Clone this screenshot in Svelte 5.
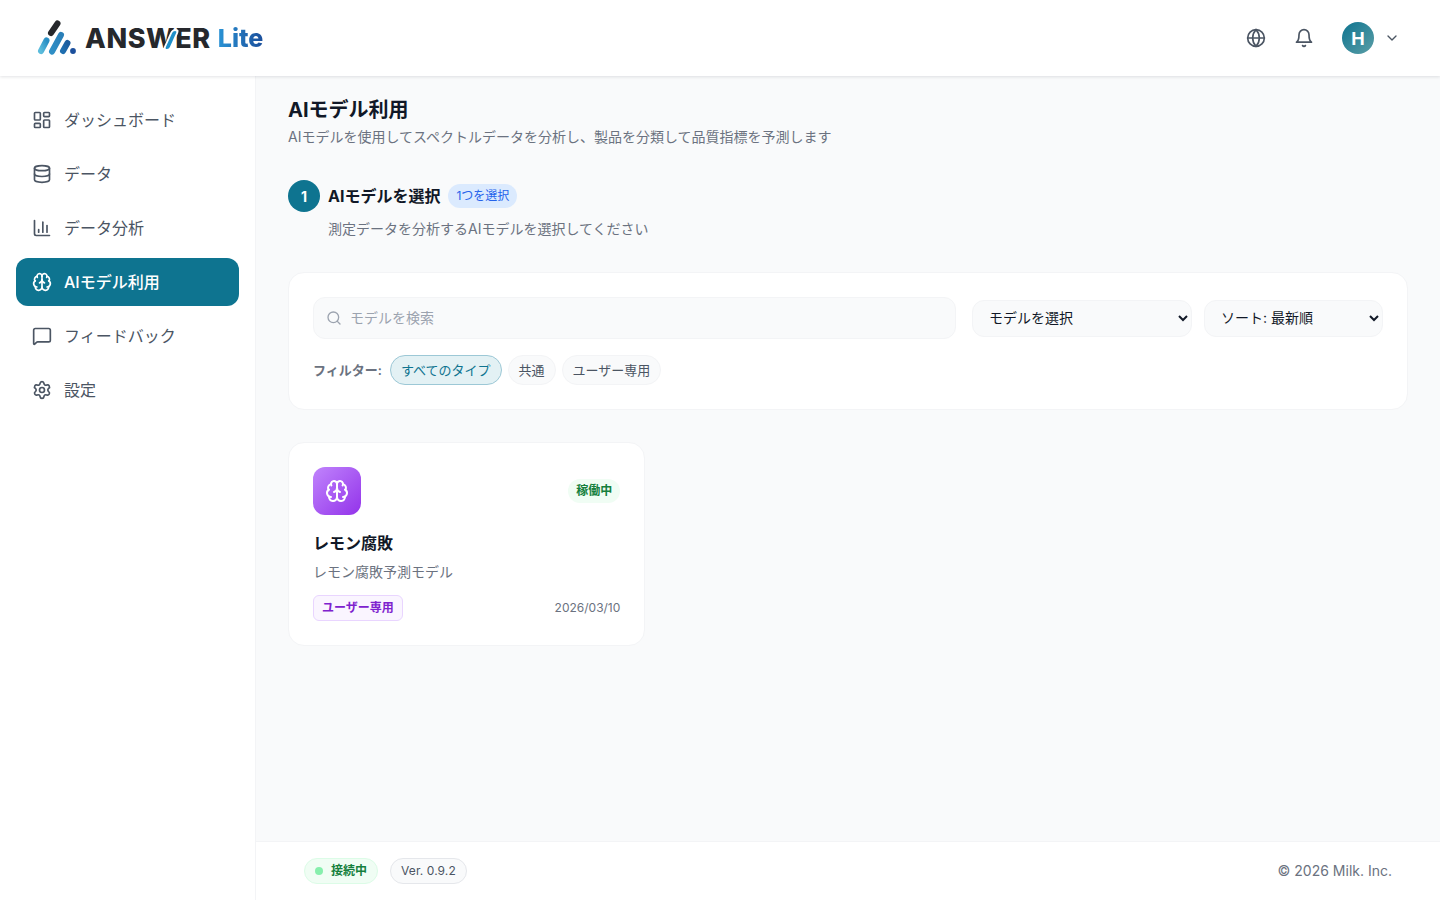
<script lang="ts">
  const nav = [
    { label: "ダッシュボード", icon: "dashboard" },
    { label: "データ", icon: "database" },
    { label: "データ分析", icon: "chart" },
    { label: "AIモデル利用", icon: "brain", active: true },
    { label: "フィードバック", icon: "message" },
    { label: "設定", icon: "settings" },
  ];
</script>

{#snippet brain()}
  <path d="M12 18V5" />
  <path d="M15 13a4.17 4.17 0 0 1-3-4 4.17 4.17 0 0 1-3 4" />
  <path d="M17.598 6.5A3 3 0 1 0 12 5a3 3 0 1 0-5.598 1.5" />
  <path d="M17.997 5.125a4 4 0 0 1 2.526 5.77" />
  <path d="M18 18a4 4 0 0 0 2-7.464" />
  <path d="M19.967 17.483A4 4 0 1 1 12 18a4 4 0 1 1-7.967-.517" />
  <path d="M6 18a4 4 0 0 1-2-7.464" />
  <path d="M6.003 5.125a4 4 0 0 0-2.526 5.77" />
{/snippet}

{#snippet navIcon(name: string)}
  <svg class="icon" viewBox="0 0 24 24">
    {#if name === "dashboard"}
      <rect x="3" y="3" width="7" height="9" rx="1" />
      <rect x="14" y="3" width="7" height="5" rx="1" />
      <rect x="14" y="12" width="7" height="9" rx="1" />
      <rect x="3" y="16" width="7" height="5" rx="1" />
    {:else if name === "database"}
      <ellipse cx="12" cy="5" rx="9" ry="3" />
      <path d="M3 5V19A9 3 0 0 0 21 19V5" />
      <path d="M3 12A9 3 0 0 0 21 12" />
    {:else if name === "chart"}
      <path d="M3 3v16a2 2 0 0 0 2 2h16" />
      <path d="M18 17V9" />
      <path d="M13 17V5" />
      <path d="M8 17v-3" />
    {:else if name === "brain"}
      {@render brain()}
    {:else if name === "message"}
      <path d="M22 17a2 2 0 0 1-2 2H6.828a2 2 0 0 0-1.414.586l-2.202 2.202A.71.71 0 0 1 2 21.286V5a2 2 0 0 1 2-2h16a2 2 0 0 1 2 2z" />
    {:else}
      <path d="M9.671 4.136a2.34 2.34 0 0 1 4.659 0 2.34 2.34 0 0 0 3.319 1.915 2.34 2.34 0 0 1 2.33 4.033 2.34 2.34 0 0 0 0 3.831 2.34 2.34 0 0 1-2.33 4.033 2.34 2.34 0 0 0-3.319 1.915 2.34 2.34 0 0 1-4.659 0 2.34 2.34 0 0 0-3.32-1.915 2.34 2.34 0 0 1-2.33-4.033 2.34 2.34 0 0 0 0-3.831A2.34 2.34 0 0 1 6.35 6.051a2.34 2.34 0 0 0 3.319-1.915" />
      <circle cx="12" cy="12" r="3" />
    {/if}
  </svg>
{/snippet}

<div class="app">
  <header class="topbar">
    <div class="logo">
      <svg class="mark" viewBox="0 0 40 36">
        <defs>
          <linearGradient id="lg1" x1="0" y1="1" x2="1" y2="0">
            <stop offset="0" stop-color="#5bbcdc" />
            <stop offset="1" stop-color="#2a8fc4" />
          </linearGradient>
          <linearGradient id="lg2" x1="0" y1="1" x2="1" y2="0">
            <stop offset="0" stop-color="#2f8fc6" />
            <stop offset="1" stop-color="#2a7fb8" />
          </linearGradient>
          <linearGradient id="lg3" x1="0" y1="1" x2="1" y2="0">
            <stop offset="0" stop-color="#1f6fb0" />
            <stop offset="1" stop-color="#1c5c9e" />
          </linearGradient>
        </defs>
        <path d="M14 13 20.5 3.5" stroke="#26282c" />
        <path d="M4 31 9.5 20.5" stroke="url(#lg1)" />
        <path d="M15 31.5 24 15" stroke="url(#lg2)" />
        <path d="M26 31 30.5 23" stroke="url(#lg3)" />
        <circle cx="36" cy="31" r="2.9" fill="#1b4f9c" />
      </svg>
      <span class="word">ANS<span class="w">W<i></i></span>ER</span>
      <span class="lite">Lite</span>
    </div>
    <div class="actions">
      <svg class="icon" viewBox="0 0 24 24">
        <circle cx="12" cy="12" r="10" />
        <path d="M12 2a14.5 14.5 0 0 0 0 20 14.5 14.5 0 0 0 0-20" />
        <path d="M2 12h20" />
      </svg>
      <svg class="icon" viewBox="0 0 24 24">
        <path d="M6 8a6 6 0 0 1 12 0c0 7 3 9 3 9H3s3-2 3-9" />
        <path d="M10.3 21a1.94 1.94 0 0 0 3.4 0" />
      </svg>
      <div class="user">
        <span class="avatar">H</span>
        <svg class="chev" viewBox="0 0 24 24"><path d="m6 9 6 6 6-6" /></svg>
      </div>
    </div>
  </header>

  <div class="body">
    <aside class="sidebar">
      {#each nav as item}
        <div class={`nav-item ${item.active ? "active" : ""}`}>
          {@render navIcon(item.icon)}
          <span>{item.label}</span>
        </div>
      {/each}
    </aside>

    <div class="column">
      <main class="content">
        <h1>AIモデル利用</h1>
        <p class="sub">AIモデルを使用してスペクトルデータを分析し、製品を分類して品質指標を予測します</p>

        <div class="step">
          <span class="step-num">1</span>
          <h2>AIモデルを選択</h2>
          <span class="step-tag">1つを選択</span>
        </div>
        <p class="step-desc">測定データを分析するAIモデルを選択してください</p>

        <section class="filters">
          <div class="filter-top">
            <label class="search">
              <svg viewBox="0 0 24 24"><circle cx="11" cy="11" r="8" /><path d="m21 21-4.3-4.3" /></svg>
              <input type="text" placeholder="モデルを検索" />
            </label>
            <select class="model-select">
              <option>モデルを選択</option>
            </select>
            <select class="sort-select">
              <option>ソート: 最新順</option>
            </select>
          </div>
          <div class="chips">
            <span class="chips-label">フィルター:</span>
            <span class="chip on">すべてのタイプ</span>
            <span class="chip">共通</span>
            <span class="chip">ユーザー専用</span>
          </div>
        </section>

        <div class="grid">
          <article class="card">
            <div class="card-top">
              <div class="card-icon">
                <svg viewBox="0 0 24 24">{@render brain()}</svg>
              </div>
              <span class="status">稼働中</span>
            </div>
            <h3>レモン腐敗</h3>
            <p class="card-desc">レモン腐敗予測モデル</p>
            <div class="card-foot">
              <span class="owner">ユーザー専用</span>
              <span class="date">2026/03/10</span>
            </div>
          </article>
        </div>
      </main>

      <footer class="footer">
        <div class="foot-left">
          <span class="conn"><i></i>接続中</span>
          <span class="ver">Ver. 0.9.2</span>
        </div>
        <span class="copy">© 2026 Milk. Inc.</span>
      </footer>
    </div>
  </div>
</div>

<style>
  :global(body) {
    margin: 0;
    background: #f9fafb;
    font-family: Inter, "Noto Sans CJK JP", sans-serif;
    color: #111827;
  }

  .app {
    display: flex;
    flex-direction: column;
    height: 900px;
    overflow: hidden;
  }

  .topbar {
    position: relative;
    z-index: 2;
    flex: none;
    display: flex;
    align-items: center;
    justify-content: space-between;
    height: 76px;
    padding: 0 40px 0 37px;
    background: #fff;
    box-shadow: 0 1px 3px rgba(17, 24, 39, 0.12);
  }

  .logo {
    display: flex;
    align-items: center;
    gap: 8px;
  }

  .mark {
    width: 40px;
    height: 36px;
    fill: none;
    stroke-width: 6;
    stroke-linecap: round;
  }

  .mark circle {
    stroke: none;
  }

  .word {
    font-size: 27px;
    font-weight: 800;
    letter-spacing: 0.6px;
    color: #26282c;
  }

  .w {
    position: relative;
    display: inline-block;
  }

  .w i {
    position: absolute;
    top: 9px;
    right: 2px;
    width: 4px;
    height: 18px;
    border-radius: 2px;
    background: #1f8fc8;
    box-shadow: 0 0 0 2px #fff;
    transform: skewX(-24deg);
  }

  .lite {
    margin-left: -1px;
    font-size: 25px;
    font-weight: 800;
    background: linear-gradient(90deg, #2a93d5, #1b4f9c);
    background-clip: text;
    -webkit-background-clip: text;
    color: transparent;
  }

  .actions {
    display: flex;
    align-items: center;
    gap: 28px;
  }

  .icon {
    flex: none;
    width: 20px;
    height: 20px;
    fill: none;
    stroke: currentColor;
    stroke-width: 2;
    stroke-linecap: round;
    stroke-linejoin: round;
  }

  .actions > .icon {
    color: #4b5563;
  }

  .user {
    display: flex;
    align-items: center;
    gap: 10px;
  }

  .avatar {
    display: grid;
    place-items: center;
    width: 32px;
    height: 32px;
    border-radius: 50%;
    background: linear-gradient(135deg, #0e7490, #5b9ea6);
    color: #fff;
    font-size: 18px;
    font-weight: 700;
  }

  .chev {
    width: 16px;
    height: 16px;
    fill: none;
    stroke: #4b5563;
    stroke-width: 2;
    stroke-linecap: round;
    stroke-linejoin: round;
  }

  .body {
    flex: 1;
    display: flex;
    min-height: 0;
  }

  .sidebar {
    flex: none;
    box-sizing: border-box;
    width: 256px;
    padding: 20px 16px 0;
    display: flex;
    flex-direction: column;
    gap: 6px;
    background: #fff;
    border-right: 1px solid #f3f4f6;
  }

  .nav-item {
    display: flex;
    align-items: center;
    gap: 12px;
    width: 223px;
    box-sizing: border-box;
    height: 48px;
    padding: 0 16px;
    border-radius: 12px;
    color: #4b5563;
    font-size: 16px;
  }

  .nav-item span {
    padding-bottom: 2px;
  }

  .nav-item.active {
    background: #0e7490;
    color: #fff;
    font-weight: 500;
  }

  .column {
    flex: 1;
    min-width: 0;
    display: flex;
    flex-direction: column;
  }

  .content {
    flex: 1;
    padding: 20px 32px 0;
  }

  h1 {
    margin: 0;
    font-size: 20px;
    line-height: 28px;
    font-weight: 700;
    color: #111827;
  }

  .sub {
    margin: 3px 0 0;
    font-size: 14px;
    line-height: 20px;
    color: #6b7280;
  }

  .step {
    display: flex;
    align-items: center;
    gap: 8px;
    margin-top: 33px;
  }

  .step-num {
    display: grid;
    place-items: center;
    width: 32px;
    height: 32px;
    border-radius: 50%;
    background: #0e7490;
    color: #fff;
    font-size: 14px;
    font-weight: 700;
  }

  h2 {
    margin: 0;
    font-size: 16px;
    line-height: 24px;
    font-weight: 700;
  }

  .step-tag {
    padding: 4px 8px;
    border-radius: 999px;
    background: #dbeafe;
    color: #2563eb;
    font-size: 12px;
    line-height: 16px;
  }

  .step-desc {
    margin: 7px 0 0 40px;
    font-size: 14px;
    line-height: 20px;
    color: #6b7280;
  }

  .filters {
    margin-top: 33px;
    padding: 24px;
    background: #fff;
    border: 1px solid #f3f4f6;
    border-radius: 16px;
  }

  .filter-top {
    display: flex;
    align-items: center;
    gap: 16px;
  }

  .search {
    flex: 1;
    display: flex;
    align-items: center;
    gap: 8px;
    box-sizing: border-box;
    height: 42px;
    padding: 0 12px;
    background: #f9fafb;
    border: 1px solid #f3f4f6;
    border-radius: 12px;
  }

  .search svg {
    width: 16px;
    height: 16px;
    fill: none;
    stroke: #9ca3af;
    stroke-width: 2;
    stroke-linecap: round;
    stroke-linejoin: round;
  }

  .search input {
    flex: 1;
    min-width: 0;
    padding: 0 0 2px;
    border: 0;
    outline: 0;
    background: transparent;
    font: inherit;
    font-size: 14px;
  }

  .search input::placeholder {
    color: #9ca3af;
  }

  select {
    box-sizing: border-box;
    height: 37px;
    padding: 0 0 2px 12px;
    background-color: #f9fafb;
    border: 1px solid #f3f4f6;
    border-radius: 12px;
    font-family: inherit;
    font-size: 14px;
    color: #111827;
  }

  .model-select {
    width: 220px;
  }

  .sort-select {
    width: 179px;
    margin-left: -4px;
  }

  .chips {
    display: flex;
    align-items: center;
    gap: 6px;
    margin-top: 16px;
  }

  .chips-label {
    width: 71px;
    padding-bottom: 2px;
    font-size: 13px;
    font-weight: 600;
    color: #6b7280;
  }

  .chip {
    padding: 6px 10px;
    border: 1px solid #f3f4f6;
    border-radius: 999px;
    background: #f9fafb;
    color: #4b5563;
    font-size: 13px;
    line-height: 16px;
  }

  .chip.on {
    background: #e3f1f4;
    border-color: #9cc8d6;
    color: #0e7490;
  }

  .grid {
    display: grid;
    grid-template-columns: repeat(3, 1fr);
    gap: 24px;
    margin-top: 32px;
  }

  .card {
    padding: 24px;
    background: #fff;
    border: 1px solid #f3f4f6;
    border-radius: 16px;
  }

  .card-top {
    display: flex;
    align-items: center;
    justify-content: space-between;
  }

  .card-icon {
    display: grid;
    place-items: center;
    width: 48px;
    height: 48px;
    border-radius: 12px;
    background: linear-gradient(135deg, #c084fc, #9333ea);
  }

  .card-icon svg {
    width: 24px;
    height: 24px;
    fill: none;
    stroke: #fff;
    stroke-width: 2;
    stroke-linecap: round;
    stroke-linejoin: round;
  }

  .status {
    padding: 4px 8px;
    border-radius: 999px;
    background: #f0fdf4;
    color: #15803d;
    font-size: 12px;
    line-height: 16px;
    font-weight: 600;
  }

  h3 {
    margin: 16px 0 0;
    font-size: 16px;
    line-height: 24px;
    font-weight: 700;
  }

  .card-desc {
    margin: 7px 0 0;
    font-size: 14px;
    line-height: 20px;
    color: #6b7280;
  }

  .card-foot {
    display: flex;
    align-items: center;
    justify-content: space-between;
    margin-top: 13px;
  }

  .owner {
    padding: 4px 8px;
    border: 1px solid #e9d5ff;
    border-radius: 6px;
    background: #faf5ff;
    color: #7e22ce;
    font-size: 12px;
    line-height: 16px;
    font-weight: 600;
  }

  .date {
    padding-bottom: 2px;
    font-size: 12px;
    color: #6b7280;
  }

  .footer {
    flex: none;
    display: flex;
    align-items: center;
    justify-content: space-between;
    box-sizing: border-box;
    height: 59px;
    padding: 0 48px;
    background: #fff;
    border-top: 1px solid #f3f4f6;
  }

  .foot-left {
    display: flex;
    align-items: center;
    gap: 12px;
  }

  .conn {
    display: flex;
    align-items: center;
    gap: 8px;
    padding: 4px 10px;
    border: 1px solid #dcfce7;
    border-radius: 999px;
    background: #f0fdf4;
    color: #15803d;
    font-size: 12px;
    line-height: 16px;
    font-weight: 600;
  }

  .conn i {
    width: 8px;
    height: 8px;
    border-radius: 50%;
    background: #86efac;
  }

  .ver {
    padding: 4px 10px;
    border: 1px solid #e5e7eb;
    border-radius: 999px;
    background: #f9fafb;
    color: #4b5563;
    font-size: 12px;
    line-height: 16px;
    letter-spacing: 0.1px;
  }

  .copy {
    padding-bottom: 2px;
    font-size: 14px;
    color: #6b7280;
  }
</style>
